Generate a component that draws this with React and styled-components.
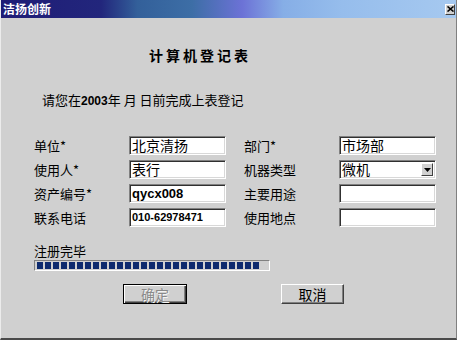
import React from "react";
import styled, { createGlobalStyle } from "styled-components";

const Global = createGlobalStyle`
  html, body { margin: 0; padding: 0; background: #d0d0d0; }
  body { font-family: "Noto Sans CJK SC", "Noto Sans", sans-serif; }
  * { box-sizing: border-box; }
`;

const Window = styled.div`
  width: 457px;
  height: 340px;
  background: #d0d0d0;
  border-left: 1px solid #ececec;
  border-right: 1px solid #808080;
  border-bottom: 2px solid #4a4a4a;
  display: flex;
  flex-direction: column;
  overflow: hidden;
`;

const TitleBar = styled.div`
  height: 18px;
  flex: none;
  display: flex;
  align-items: center;
  justify-content: space-between;
  padding: 0 1px 0 2px;
  background: linear-gradient(
    90deg,
    #1f1c76 0%,
    #22267c 22%,
    #33609a 30%,
    #3d6ea6 42%,
    #6c72d6 53%,
    #86aee6 62%,
    #96bdec 75%,
    #a6c9f0 100%
  );
`;

const TitleText = styled.span`
  color: #ffffff;
  font-size: 12px;
  font-weight: 700;
  line-height: 14px;
`;

const CloseButton = styled.div`
  width: 10px;
  height: 11px;
  background: #d0d0d0;
  border-top: 1px solid #ffffff;
  border-left: 1px solid #ffffff;
  border-right: 1px solid #404040;
  border-bottom: 1px solid #404040;
  display: flex;
  align-items: center;
  justify-content: center;
`;

const Body = styled.div`
  flex: 1;
  padding: 0 0 0 33px;
  display: flex;
  flex-direction: column;
`;

const Heading = styled.div`
  margin-top: 29px;
  padding-left: 115px;
  font-size: 14px;
  line-height: 16px;
  font-weight: 700;
  letter-spacing: 3px;
  color: #000;
`;

const Notice = styled.div`
  margin-top: 29px;
  padding-left: 8px;
  font-size: 13px;
  line-height: 15px;
  color: #000;
  white-space: pre;
`;

const Year = styled.span`
  font-family: "Liberation Sans", Arial, sans-serif;
  font-weight: 700;
  font-size: 12px;
`;

const Form = styled.div`
  margin-top: 27px;
  display: grid;
  grid-template-columns: 95px 115px 95px 97px;
  grid-auto-rows: 19px;
  row-gap: 5px;
  align-items: center;
`;

const Label = styled.div`
  font-size: 13px;
  line-height: 15px;
  color: #000;
`;

const Field = styled.div`
  width: 97px;
  height: 19px;
  background: #ffffff;
  border-top: 1px solid #808080;
  border-left: 1px solid #808080;
  border-right: 1px solid #ffffff;
  border-bottom: 1px solid #ffffff;
  box-shadow: inset 1px 1px 0 #303030, inset -1px -1px 0 #d8d8d8;
  display: flex;
  align-items: center;
  padding-left: 2px;
  color: #000;
  font-size: ${(p) => (p.$latin ? (p.$small ? "11px" : "13px") : "14px")};
  font-weight: ${(p) => (p.$latin ? 700 : 400)};
  font-family: ${(p) =>
    p.$latin
      ? '"Liberation Sans", Arial, sans-serif'
      : '"Noto Sans CJK SC", sans-serif'};
  line-height: 15px;
  white-space: nowrap;
`;

const SelectBox = styled(Field)`
  justify-content: space-between;
  padding-right: 2px;
`;

const DropButton = styled.div`
  width: 12px;
  height: 13px;
  background: #d0d0d0;
  border-top: 1px solid #ffffff;
  border-left: 1px solid #ffffff;
  border-right: 1px solid #404040;
  border-bottom: 1px solid #404040;
  display: flex;
  align-items: center;
  justify-content: center;
`;

const ProgressLabel = styled.div`
  margin-top: 17px;
  font-size: 13px;
  line-height: 14px;
  color: #000;
`;

const ProgressTrack = styled.div`
  margin-top: 2px;
  width: 236px;
  height: 11px;
  border-top: 1px solid #808080;
  border-left: 1px solid #808080;
  border-right: 1px solid #ffffff;
  border-bottom: 1px solid #ffffff;
  background: #d0d0d0;
  display: flex;
  gap: 2px;
  padding: 1px 1px 1px 2px;
`;

const Segment = styled.div`
  width: 6px;
  height: 100%;
  background: #0d2a6e;
  flex: none;
`;

const ButtonRow = styled.div`
  margin-top: 13px;
  padding-left: 89px;
  display: flex;
  gap: 94px;
`;

const Button = styled.div`
  width: ${(p) => (p.$default ? "64px" : "63px")};
  height: 20px;
  background: #d0d0d0;
  display: flex;
  align-items: center;
  justify-content: center;
  font-size: 14px;
  line-height: 16px;
  color: ${(p) => (p.$disabled ? "#8a8a8a" : "#000")};
  text-shadow: ${(p) => (p.$disabled ? "1px 1px 0 #f4f4f4" : "none")};
  border: 1px solid ${(p) => (p.$default ? "#000" : "#d0d0d0")};
  box-shadow: inset 1px 1px 0 #ffffff, inset -1px -1px 0 #404040,
    inset -2px -2px 0 #808080;
  ${(p) =>
    !p.$default &&
    `border-top-color:#ffffff;border-left-color:#ffffff;border-right-color:#404040;border-bottom-color:#404040;box-shadow: inset -1px -1px 0 #808080;`}
`;

const rows = [
  ["单位*", { text: "北京清扬" }, "部门*", { text: "市场部" }],
  ["使用人*", { text: "表行" }, "机器类型", { text: "微机", select: true }],
  ["资产编号*", { text: "qycx008", latin: true }, "主要用途", { text: "" }],
  [
    "联系电话",
    { text: "010-62978471", latin: true, small: true },
    "使用地点",
    { text: "" },
  ],
];

function Input({ f }) {
  if (f.select) {
    return (
      <SelectBox>
        <span>{f.text}</span>
        <DropButton>
          <svg width="7" height="4" viewBox="0 0 7 4">
            <path d="M0 0h7L3.5 4z" fill="#000" />
          </svg>
        </DropButton>
      </SelectBox>
    );
  }
  return (
    <Field $latin={f.latin} $small={f.small}>
      {f.text}
    </Field>
  );
}

export default function App() {
  const segments = Array.from({ length: 28 });
  return (
    <>
      <Global />
      <Window>
        <TitleBar>
          <TitleText>洁扬创新</TitleText>
          <CloseButton>
            <svg width="7" height="6" viewBox="0 0 7 6">
              <path
                d="M0.5 0.5L6.5 5.5M6.5 0.5L0.5 5.5"
                stroke="#000"
                strokeWidth="1.6"
              />
            </svg>
          </CloseButton>
        </TitleBar>
        <Body>
          <Heading>计算机登记表</Heading>
          <Notice>
            请您在<Year>2003</Year>年 月 日前完成上表登记
          </Notice>
          <Form>
            {rows.map((r, i) => (
              <React.Fragment key={i}>
                <Label>{r[0]}</Label>
                <Input f={r[1]} />
                <Label>{r[2]}</Label>
                <Input f={r[3]} />
              </React.Fragment>
            ))}
          </Form>
          <ProgressLabel>注册完毕</ProgressLabel>
          <ProgressTrack>
            {segments.map((_, i) => (
              <Segment key={i} />
            ))}
          </ProgressTrack>
          <ButtonRow>
            <Button $default $disabled>
              确定
            </Button>
            <Button>取消</Button>
          </ButtonRow>
        </Body>
      </Window>
    </>
  );
}
